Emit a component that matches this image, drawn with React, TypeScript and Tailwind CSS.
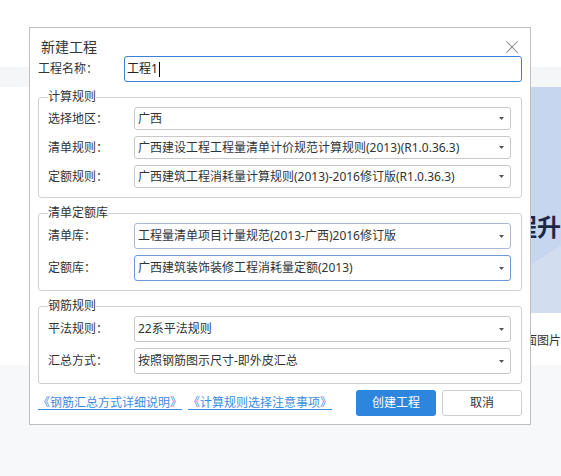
import { X } from 'lucide-react';

type SelectProps = {
    value: string;
    tall?: boolean;
    borderClass?: string;
};

function Select({ value, tall, borderClass }: SelectProps) {
    return (
        <div
            className={
                (tall ? 'h-[26px] ' : 'h-[23px] ') +
                'flex flex-1 items-center rounded-[3px] border bg-white pl-[3px] pr-[6px] text-[12px] text-[#333] ' +
                (borderClass ?? 'border-[#c9c9c9]')
            }
        >
            <span className="flex-1 truncate whitespace-nowrap">{value}</span>
            <svg width="5" height="3" viewBox="0 0 5 3" className="shrink-0">
                <path d="M0 0 H5 L2.5 3 Z" fill="#555" />
            </svg>
        </div>
    );
}

type Field = {
    label: string;
    value: string;
    borderClass?: string;
};

function Group({
    title,
    fields,
    tall,
    className,
}: {
    title: string;
    fields: Field[];
    tall?: boolean;
    className?: string;
}) {
    return (
        <fieldset
            className={
                'rounded-[3px] border border-[#d0d0d0] pb-[9px] pl-[9px] pr-[10px] pt-[2px] ' +
                (className ?? '')
            }
        >
            <legend className="text-[12px] leading-[16px] text-[#333]">
                {title}
            </legend>
            <div className="flex flex-col gap-[6px]">
                {fields.map((field) => (
                    <div key={field.label} className="flex items-center">
                        <span className="w-[86px] shrink-0 text-[12px] text-[#333]">
                            {field.label}
                        </span>
                        <Select
                            value={field.value}
                            tall={tall}
                            borderClass={field.borderClass}
                        />
                    </div>
                ))}
            </div>
        </fieldset>
    );
}

export default function App() {
    return (
        <div className="relative min-h-[476px] overflow-hidden bg-white font-['Noto_Sans','Noto_Sans_CJK_SC',sans-serif]">
            {/* page behind the dialog */}
            <div className="h-[67px]" />
            <div className="h-[20px] bg-[#f5f6f8]" />
            <div className="flex h-[278px]">
                <div className="w-[489px] shrink-0" />
                <div className="flex flex-1 flex-col overflow-hidden">
                    <div className="h-[226px] pt-[128px] [background-image:linear-gradient(147deg,#c6d6ef_172px,#d2ddf0_172px)]">
                        <p className="whitespace-nowrap text-[24px] font-bold leading-[24px] text-[#1b2947]">
                            工程升
                        </p>
                    </div>
                    <div className="flex flex-1 items-center whitespace-nowrap pt-[4px] text-[12px] text-[#333]">
                        上传封面图片
                    </div>
                </div>
            </div>
            <div className="h-[111px] bg-[#f7f8fa]" />

            {/* dialog */}
            <div className="absolute left-[29px] top-[27px] flex h-[398px] w-[502px] flex-col border border-[#bfbfbf] bg-white px-[8px]">
                <button
                    type="button"
                    className="absolute right-[7px] top-[8px] text-[#8a8a8a]"
                >
                    <X size={22} strokeWidth={1.1} />
                </button>

                <div className="mt-[10px] h-[18px] pl-[3px] text-[14px] leading-[18px] text-[#333]">
                    新建工程
                </div>

                <div className="flex h-[26px] items-center">
                    <span className="w-[86px] shrink-0 text-[12px] text-[#333]">
                        工程名称：
                    </span>
                    <div className="flex h-full flex-1 items-center rounded-[3px] border border-[#3a80d6] pl-[2px] text-[12px] text-[#222]">
                        工程1
                        <span className="ml-px h-[15px] w-px bg-black" />
                    </div>
                </div>

                <Group
                    className="mt-[7px]"
                    title="计算规则"
                    fields={[
                        { label: '选择地区：', value: '广西' },
                        {
                            label: '清单规则：',
                            value: '广西建设工程工程量清单计价规范计算规则(2013)(R1.0.36.3)',
                        },
                        {
                            label: '定额规则：',
                            value: '广西建筑工程消耗量计算规则(2013)-2016修订版(R1.0.36.3)',
                        },
                    ]}
                />

                <Group
                    className="mt-[7px]"
                    title="清单定额库"
                    tall
                    fields={[
                        {
                            label: '清单库：',
                            value: '工程量清单项目计量规范(2013-广西)2016修订版',
                            borderClass: 'border-[#a9b7d6]',
                        },
                        {
                            label: '定额库：',
                            value: '广西建筑装饰装修工程消耗量定额(2013)',
                            borderClass: 'border-[#7096da]',
                        },
                    ]}
                />

                <Group
                    className="mt-[7px]"
                    title="钢筋规则"
                    tall
                    fields={[
                        { label: '平法规则：', value: '22系平法规则' },
                        {
                            label: '汇总方式：',
                            value: '按照钢筋图示尺寸-即外皮汇总',
                        },
                    ]}
                />

                <div className="mt-[6px] flex items-center">
                    <a className="cursor-pointer text-[12px] leading-[14px] text-[#3d8be0] underline underline-offset-2">
                        《钢筋汇总方式详细说明》
                    </a>
                    <a className="ml-[6px] cursor-pointer text-[12px] leading-[14px] text-[#3d8be0] underline underline-offset-2">
                        《计算规则选择注意事项》
                    </a>
                    <button
                        type="button"
                        className="ml-auto h-[26px] w-[80px] rounded-[3px] bg-[#2e85de] text-[12px] text-white"
                    >
                        创建工程
                    </button>
                    <button
                        type="button"
                        className="ml-[6px] h-[26px] w-[80px] rounded-[3px] border border-[#cfcfcf] bg-white text-[12px] text-[#333]"
                    >
                        取消
                    </button>
                </div>
            </div>
        </div>
    );
}
